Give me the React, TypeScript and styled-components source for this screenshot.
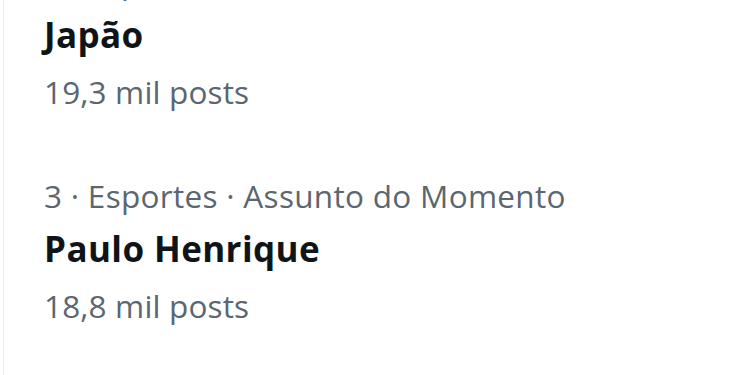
import styled, { createGlobalStyle } from "styled-components";

const GlobalStyle = createGlobalStyle`
    html, body {
        margin: 0;
        padding: 0;
        background: #ffffff;
        overflow: hidden;
    }
    body {
        font-family: "Open Sans", "Liberation Sans", sans-serif;
    }
`;

const Panel = styled.div`
    width: 746px;
    height: 375px;
    margin-left: 3px;
    border-left: 1px solid #e9ecee;
    overflow: hidden;
`;

// the screenshot is a crop, so the list is scrolled up a bit
const TrendList = styled.ul`
    list-style: none;
    margin: -70px 0 0 0;
    padding: 0;
`;

const Trend = styled.li`
    display: flex;
    flex-direction: column;
    padding: 32px 0 32px 40px;
`;

const Meta = styled.span`
    font-size: 31.5px;
    line-height: 40px;
    letter-spacing: 0.3px;
    color: #5b6670;
    white-space: nowrap;
`;

const Name = styled.span`
    margin-top: 10.6px;
    font-size: 35px;
    line-height: 44px;
    font-weight: 700;
    letter-spacing: 0.4px;
    color: #0f1419;
    white-space: nowrap;
`;

const Posts = styled.span`
    margin-top: 15.4px;
    font-size: 31.5px;
    line-height: 40px;
    letter-spacing: 0.15px;
    color: #5b6670;
    white-space: nowrap;
`;

const trends = [
    { rank: 2, category: "Esportes", name: "Japão", posts: "19,3 mil posts" },
    { rank: 3, category: "Esportes", name: "Paulo Henrique", posts: "18,8 mil posts" },
];

const App: React.FC = () => {
    return (
        <>
            <GlobalStyle />
            <Panel>
                <TrendList>
                    {trends.map((t) => (
                        <Trend key={t.rank}>
                            <Meta>
                                {t.rank} · {t.category} · Assunto do Momento
                            </Meta>
                            <Name>{t.name}</Name>
                            <Posts>{t.posts}</Posts>
                        </Trend>
                    ))}
                </TrendList>
            </Panel>
        </>
    );
};

export default App;
